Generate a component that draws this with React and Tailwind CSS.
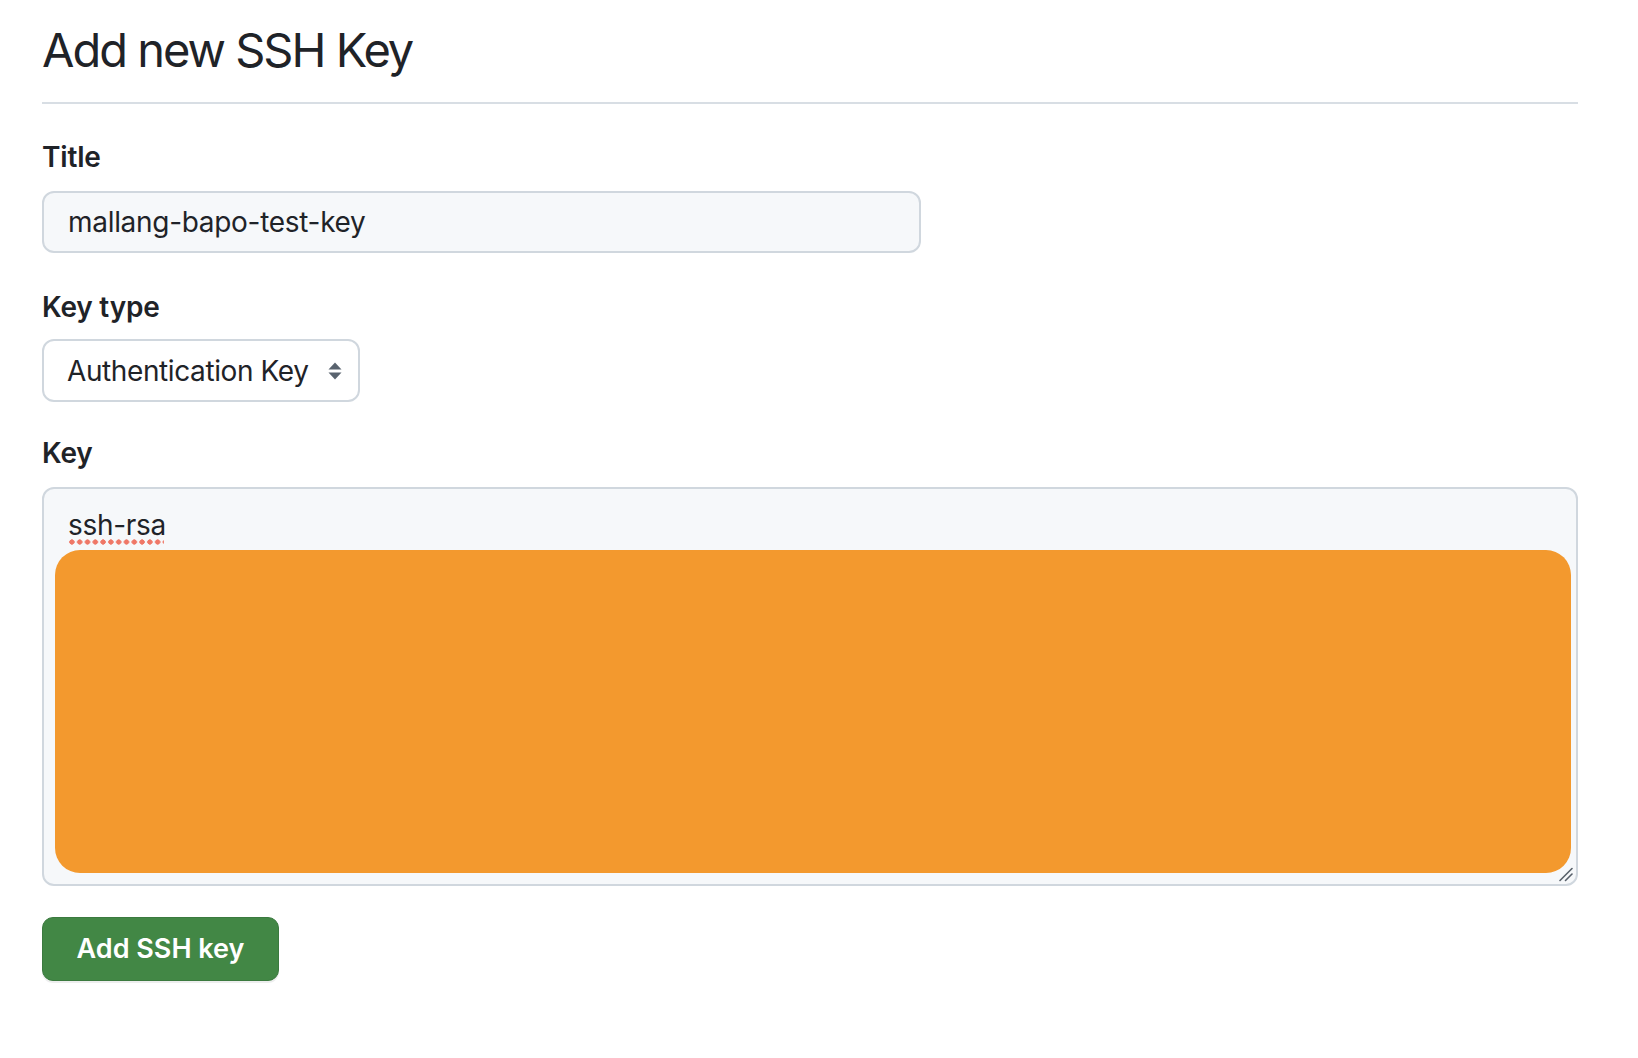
import React from "react";

function SelectArrows() {
  return (
    <svg width="14" height="18" viewBox="0 0 14 18" className="shrink-0">
      <path d="M7 0.5 L13.5 7.5 L0.5 7.5 Z" fill="#59636e" />
      <path d="M0.5 10.5 L13.5 10.5 L7 17.5 Z" fill="#59636e" />
    </svg>
  );
}

function ResizeGrip() {
  return (
    <svg width="16" height="16" viewBox="0 0 16 16" className="absolute right-[2px] bottom-[2px]">
      <path d="M2 14.5 L14 2.5" stroke="#57606a" strokeWidth="1.6" strokeLinecap="round" />
      <path d="M7.5 14.5 L14 8" stroke="#57606a" strokeWidth="1.6" strokeLinecap="round" />
    </svg>
  );
}

export default function App() {
  return (
    <div
      className="min-h-[1058px] w-full bg-white px-[42px] pt-[20px] text-[#1f2328]"
      style={{ fontFamily: "Inter, 'Noto Sans', 'Liberation Sans', sans-serif" }}
    >
      <div className="w-[1536px]">
        <div className="border-b-2 border-[#d8dee4] pb-[22px]">
          <h1 className="text-[47px] font-normal leading-[60px] tracking-[-2px]">Add new SSH Key</h1>
        </div>

        <div className="mt-[32px]">
          <label className="block text-[28px] font-semibold leading-[42px] tracking-[-0.2px]">Title</label>
          <div className="mt-[13px] flex h-[62px] w-[879px] items-center rounded-[12px] border-2 border-[#d0d7de] bg-[#f6f8fa] px-[24px] text-[28px] leading-[42px] tracking-[-0.3px]">
            mallang-bapo-test-key
          </div>
        </div>

        <div className="mt-[33px]">
          <label className="block text-[28px] font-semibold leading-[42px] tracking-[-0.2px]">Key type</label>
          <div className="mt-[11px] flex h-[63px] w-[318px] items-center justify-between rounded-[12px] border-2 border-[#d0d7de] bg-white pl-[23px] pr-[16px] text-[28px] leading-[42px] tracking-[-0.4px]">
            <span>Authentication Key</span>
            <SelectArrows />
          </div>
        </div>

        <div className="mt-[30px]">
          <label className="block text-[28px] font-semibold leading-[42px] tracking-[-0.2px]">Key</label>
          <div className="relative mt-[13px] h-[399px] w-full rounded-[12px] border-2 border-[#d0d7de] bg-[#f6f8fa] px-[24px] pt-[15px] text-[28px] leading-[42px] tracking-[-0.3px]">
            <span className="relative inline-block">
              ssh-rsa
              <span className="absolute left-0 right-[2px] top-[35px] h-[6px] bg-[radial-gradient(circle,#ef7766_2.4px,transparent_2.9px)] bg-[length:7.8px_6px] bg-repeat-x" />
            </span>
            <div className="absolute left-[11px] right-[5px] top-[61px] bottom-[11px] rounded-[25px] bg-[#f3992e]" />
            <ResizeGrip />
          </div>
        </div>

        <button className="mt-[31px] flex h-[64px] w-[237px] items-center justify-center rounded-[11px] border border-[#3b7a3f] bg-[#428745] text-[27px] font-semibold text-white shadow-[0_2px_0_rgba(31,35,40,0.08)]">
          Add SSH key
        </button>
      </div>
    </div>
  );
}
